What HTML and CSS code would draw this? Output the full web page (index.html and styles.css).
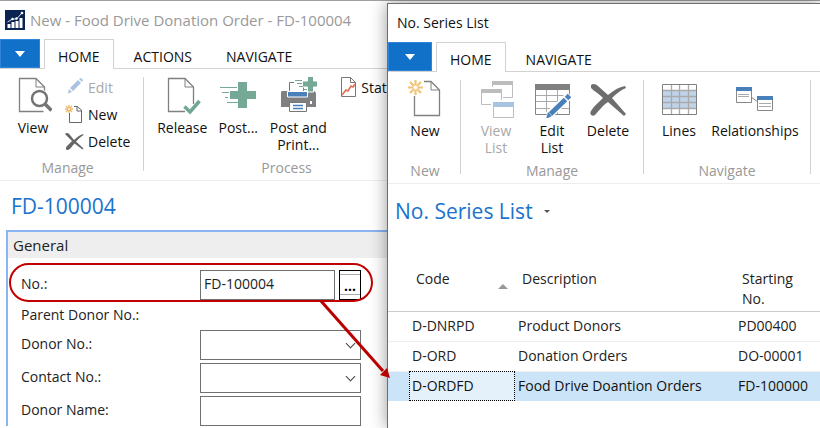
FILE: index.html
```
<!DOCTYPE html>
<html lang="en">
<head>
<meta charset="utf-8">
<title>New - Food Drive Donation Order - FD-100004</title>
<link rel="stylesheet" href="styles.css">
</head>
<body>
<div class="desktop">

<!-- donation order -->
<div class="window order">
  <div class="titlebar">
    <svg class="logo" width="20" height="20" viewBox="0 0 20 20"><path fill="#0b2350" d="M0 0h20v20H0z"/><path fill="#fff" d="M2.500 14h3v4h-3zM6.500 12h3v6h-3zM10.500 11h3v7h-3zM14.500 8h3v10h-3z"/><path fill="none" stroke="#dfe5ee" d="M2.500 12l5-3 4 0 5.500-6"/><circle cx="7.500" cy="9" r="1.200" fill="#fff"/><circle cx="11.500" cy="8.500" r="1.200" fill="#fff"/><circle cx="17" cy="3" r="1.300" fill="#fff"/></svg>
    <span>New - Food Drive Donation Order - FD-100004</span>
  </div>
  <div class="tabs">
    <button class="file" aria-label="Menu"></button>
    <button class="tab active">HOME</button>
    <button class="tab">ACTIONS</button>
    <button class="tab">NAVIGATE</button>
  </div>
  <div class="ribbon">
    <div class="group">
      <div class="tools">
        <button class="big">
          <svg width="38" height="38" viewBox="0 0 38 38"><path fill="#fff" stroke="#808080" stroke-width="1.300" d="M29.500 34.500H5.500V1.500H22l8.500 8.500v5"/><path fill="none" stroke="#808080" d="M22 1.500v8.500h8.500"/><circle cx="25.500" cy="21.500" r="9.500" fill="#fff"/><circle cx="25.500" cy="21.500" r="7.500" fill="#fff" stroke="#747474" stroke-width="2.500"/><path stroke="#747474" stroke-width="3.500" d="M31 27l6.500 6.500"/></svg>
          View
        </button>
        <div class="stack">
          <button class="small off">
            <svg width="20" height="20" viewBox="0 0 20 20"><path fill="#a9c3df" d="M13 3l3 3-8 8-3-3zM4 12l3 3-4 1.500zM14 2l2-1 2 2-1 2z"/></svg>
            Edit
          </button>
          <button class="small">
            <svg width="20" height="20" viewBox="0 0 20 20"><path fill="none" stroke="#666" d="M4.500 9v9.500h12V6L12 2.500H9M12 2.500V7h4.500"/><path stroke="#edb765" stroke-width="1.300" d="M4 1v8M0 5h8M1 2l6 6M7 2L1 8"/><circle cx="4" cy="5" r="1" fill="#fff"/></svg>
            New
          </button>
          <button class="small">
            <svg width="20" height="20" viewBox="0 0 20 20"><path fill="#666" d="M0 3c1-2 4-1 5 1l4 5c3-3 6-5 9-6l.5 1c-3 2-5 4-7.500 6.500l7.500 7-1 1L9.500 12.500C6.500 15.500 5 19 2.500 19S1 16 2 15l5-5z"/></svg>
            Delete
          </button>
        </div>
      </div>
      <div class="caption">Manage</div>
    </div>
    <div class="group process">
      <div class="tools">
        <button class="big">
          <svg width="38" height="38" viewBox="0 0 38 38"><path fill="#fff" stroke="#808080" stroke-width="1.300" d="M22 34.500H5.500V1.500H22l8.500 8.500v17"/><path fill="none" stroke="#808080" d="M22 1.500v8.500h8.500"/><path fill="none" stroke="#72a594" stroke-width="3.500" d="M21.500 29.500l5.500 5.500 9.500-11"/></svg>
          Release
        </button>
        <button class="big">
          <svg width="38" height="38" viewBox="0 0 38 38"><path fill="#76a896" d="M19 5h9v9h9v8h-9v9h-9v-9h-8v-8h8z"/><path stroke="#76a896" d="M1 10.500h17M3 15.500h7M6 20.500h3M8 25.500h11"/></svg>
          Post...
        </button>
        <button class="big wide">
          <svg width="38" height="38" viewBox="0 0 38 38"><path fill="#fff" stroke="#777" d="M10.500 16V5.500h14V16"/><path fill="#808080" d="M3 14h31q3 0 3 3v13H2V16q0-2 1-2z"/><path fill="#4a80ba" stroke="#fff" d="M8.500 14.500h20v5.500h-20z"/><path fill="#fff" stroke="#777" d="M10.500 25.500h17v9h-17z"/><path fill="#fff" d="M31 24h2v3h-2z"/><path stroke="#4a80ba" stroke-width="1.500" d="M14 28.500h10M14 31.500h10"/><path fill="#fff" d="M14 0h14v10H16z"/><path fill="#76a896" stroke="#fff" d="M28.500-1h6v5h4v6h-4v5h-6v-5h-5V4h5z"/><path stroke="#76a896" d="M16 3.500h7M18 6.500h5M20 9.500h4M24 12.500h4"/></svg>
          Post and<br>Print...
        </button>
        <button class="small stats">
          <svg width="20" height="20" viewBox="0 0 20 20"><path fill="#fff" stroke="#777" d="M3.500.5h9l5 5v14h-14z"/><path fill="none" stroke="#777" d="M12.500.5v5h5"/><path fill="none" stroke="#df6f55" stroke-width="1.600" d="M4 18l4-5 2 1 3-5 2 1 2-3"/></svg>
          Statistics
        </button>
      </div>
      <div class="caption">Process</div>
    </div>
  </div>

  <h1 class="heading">FD-100004</h1>

  <div class="fasttab">
    <h2>General</h2>
    <form class="fields">
      <label for="no">No.:</label>
      <div class="lookup"><input type="text" id="no" value="FD-100004"><button type="button" class="dots" aria-label="Lookup">...</button></div>
      <div class="plain">Parent Donor No.:</div>
      <label for="donor">Donor No.:</label>
      <div class="drop"><select id="donor"><option></option></select></div>
      <label for="contact">Contact No.:</label>
      <div class="drop"><select id="contact"><option></option></select></div>
      <label for="name">Donor Name:</label>
      <input type="text" id="name">
    </form>
  </div>
</div>

<!-- number series list -->
<div class="window series">
  <div class="titlebar">No. Series List</div>
  <div class="tabs">
    <button class="file" aria-label="Menu"></button>
    <button class="tab active">HOME</button>
    <button class="tab">NAVIGATE</button>
  </div>
  <div class="ribbon">
    <div class="group first">
      <div class="tools">
        <button class="big">
          <svg width="38" height="38" viewBox="0 0 38 38"><path fill="#fff" stroke="#808080" stroke-width="1.300" d="M8.500 16v19.500h25V10L25 1.500H18"/><path fill="none" stroke="#808080" d="M25 1.500V10h8.500"/><path stroke="#f0c476" stroke-width="2.200" d="M9.500 0v5M9.500 10v5M2 7.500h5M12 7.500h5M4 2l3.500 3.500M11.500 9.500L15 13M15 2l-3.500 3.500M7.500 9.500L4 13"/><circle cx="9.500" cy="7.500" r="2.500" fill="#fff" stroke="#f0c476"/></svg>
          New
        </button>
      </div>
      <div class="caption">New</div>
    </div>
    <div class="group">
      <div class="tools">
        <button class="big off">
          <svg width="38" height="38" viewBox="0 0 38 38"><path fill="#fff" stroke="#bdbdbd" d="M15.500 3.500h20v14h-20z"/><path fill="#bdbdbd" d="M15 1h21v4H15z"/><path fill="#fff" d="M2 7h24v19H2z"/><path fill="#fff" stroke="#bdbdbd" d="M4.500 10.500h20v14h-20z"/><path fill="#bdbdbd" d="M4 9h21v4H4z"/><path fill="#fff" d="M14 20h24v18H14z"/><path fill="#fff" stroke="#bdbdbd" d="M16.500 24.500h20v13h-20z"/><path fill="#a7c3df" d="M16 22h21v5H16z"/></svg>
          View<br>List
        </button>
        <button class="big">
          <svg width="38" height="38" viewBox="0 0 38 38"><path fill="#fff" stroke="#858585" d="M2.500 5.500h34v29h-34z"/><path stroke="#aaa" d="M3 15.500h33M3 21.500h33M3 28.500h33M13.500 9v25M24.500 9v25"/><path fill="#808080" d="M2 4h35v6H2z"/><path stroke="#fff" stroke-width="8" d="M15 36l22-21"/><path stroke="#4a80ba" stroke-width="5" d="M17.500 34l15-14.500M33.500 18.500l3-3"/><path fill="#4a80ba" d="M15 32l4 4-6 3z"/></svg>
          Edit<br>List
        </button>
        <button class="big">
          <svg width="38" height="38" viewBox="0 0 38 38"><path fill="#6e6e6e" d="M2 5c2-2 5-1 7 1l10 9c6-5 11-8 17-9l1 2c-5 2-10 6-14 10l14 16-2 2-16-14C13 26 9 32 6 35c-3 2-6-1-4-4 3-5 7-8 12-13C9 13 5 11 2 8z"/></svg>
          Delete
        </button>
      </div>
      <div class="caption">Manage</div>
    </div>
    <div class="group">
      <div class="tools">
        <button class="big">
          <svg width="38" height="38" viewBox="0 0 38 38"><path fill="#fff" d="M2 4h35v31H2z"/><path fill="#bfd3e9" d="M2 10h35v19H2z"/><path fill="none" stroke="#aaa" stroke-width="1.300" d="M2 10.500h35M2 16.500h35M2 22.500h35M2 28.500h35M11.500 4v31M19.500 4v31M28.500 4v31"/><path fill="none" stroke="#808080" d="M2.500 4.500h34v30h-34z"/></svg>
          Lines
        </button>
        <button class="big xwide">
          <svg width="38" height="38" viewBox="0 0 38 38"><path fill="none" stroke="#888" d="M15 17l7 5"/><path fill="#fff" stroke="#888" d="M.5 7.500h15v15H.5zM21.500 16.500h15v14h-15z"/><path fill="#4a80ba" d="M0 7h16v4H0zM21 16h16v4H21z"/><path stroke="#aaa" d="M2 14.500h11M2 16.500h11M23 23.500h12M23 26.500h12"/></svg>
          Relationships
        </button>
      </div>
      <div class="caption">Navigate</div>
    </div>
  </div>

  <h1 class="heading">No. Series List <span class="caret"></span></h1>

  <table class="list">
    <thead>
      <tr><th class="gutter"></th><th class="code">Code<span class="sort"></span></th><th class="desc">Description</th><th>Starting<br>No.</th></tr>
    </thead>
    <tbody>
      <tr><td></td><td>D-DNRPD</td><td>Product Donors</td><td>PD00400</td></tr>
      <tr><td></td><td>D-ORD</td><td>Donation Orders</td><td>DO-00001</td></tr>
      <tr class="selected"><td></td><td class="focus">D-ORDFD</td><td>Food Drive Doantion Orders</td><td>FD-100000</td></tr>
    </tbody>
  </table>
</div>

<!-- callout from the No. field to the selected series -->
<svg class="callout" width="384" height="120" viewBox="0 0 384 120">
  <rect x="2" y="2" width="362" height="37" rx="18.500" fill="none" stroke="#c00000" stroke-width="2"/>
  <path stroke="#b80000" stroke-width="3" d="M313 39l62 70"/>
  <path fill="#b80000" d="M382 116l-10-3 7-7z"/>
</svg>

</div>
</body>
</html>
```
FILE: styles.css
```
* {
    box-sizing: border-box;
}

body {
    margin: 0;
    font-family: "Open Sans", "Noto Sans", sans-serif;
    font-size: 14px;
    color: #222;
    background: #fff;
}

button, input, select {
    font: inherit;
    color: inherit;
    margin: 0;
    border-radius: 0;
}

button {
    padding: 0;
    border: none;
    background: none;
}

h1, h2 {
    margin: 0;
    font-weight: normal;
}

.desktop {
    position: relative;
    min-height: 100vh;
    overflow: hidden;
}

.window {
    background: #fff;
}

.order {
    border-top: 1px solid #a0a0a0;
}

.series {
    position: absolute;
    top: 3px;
    right: 0;
    bottom: 0;
    left: 387px;
    border-top: 1px solid #6e6e6e;
    border-left: 1px solid #6e6e6e;
    box-shadow: 0 0 16px rgba(0, 0, 0, 0.4);
}

.titlebar {
    display: flex;
    align-items: center;
    gap: 5px;
    height: 38px;
    padding: 0 5px;
    color: #999;
    font-size: 15px;
}

.series .titlebar {
    padding: 0 9px 2px;
    color: #111;
    font-size: 14px;
}

/* ribbon */
.tabs {
    display: flex;
    height: 30px;
    border-bottom: 1px solid #d2d2d2;
}

.file {
    width: 40px;
    height: 29px;
    margin-right: 4px;
    background: #1170c8;
    border: 1px solid #2f86d8;
}

.series .file {
    width: 44px;
}

.file::before {
    content: "";
    display: block;
    width: 0;
    margin: 0 auto;
    border: 5px solid transparent;
    border-top: 6px solid #fff;
    border-bottom: none;
}

.tab {
    height: 30px;
    padding: 4px 17px 0;
    color: #111;
}

.tab.active {
    padding: 3px 13px 0;
    margin-right: 3px;
    background: #fff;
    border: 1px solid #d2d2d2;
    border-bottom: none;
}

.ribbon {
    display: flex;
    height: 112px;
    padding: 8px 0 9px;
    border-bottom: 1px solid #eee;
}

.group {
    flex: none;
    display: flex;
    flex-direction: column;
    justify-content: space-between;
    padding: 0 7px;
    border-right: 1px solid #d2d2d2;
}

.group.first {
    padding: 0 7px 0 9px;
}

.order .group {
    padding: 0 13px 0 5px;
}

.order .process {
    padding: 0 10px;
}

.tools {
    display: flex;
    align-items: flex-start;
}

.big {
    display: flex;
    flex-direction: column;
    align-items: center;
    width: 56px;
    line-height: 17px;
    color: #111;
    white-space: nowrap;
}

.big svg {
    margin-bottom: 4px;
}

.wide {
    width: 64px;
}

.xwide {
    width: 96px;
}

.stack {
    display: flex;
    flex-direction: column;
    gap: 7px;
    margin-left: 4px;
}

.small {
    display: flex;
    align-items: center;
    gap: 3px;
    height: 20px;
    color: #111;
}

.stats {
    margin-left: 8px;
}

.off {
    color: #a8a8a8;
}

.caption {
    margin-bottom: -4px;
    line-height: 14px;
    color: #999;
    text-align: center;
}

.heading {
    display: flex;
    align-items: center;
    height: 49px;
    padding: 0 11px;
    font-size: 21px;
    color: #1a73cc;
}

.series .heading {
    height: 54px;
    padding: 0 7px;
}

.caret {
    margin-left: 11px;
    border: 3px solid transparent;
    border-top-color: #555;
    border-bottom: none;
}

/* general fasttab */
.fasttab {
    margin-left: 6px;
    border-top: 2px solid #8ab4f2;
    border-left: 2px solid #8ab4f2;
}

.fasttab h2 {
    padding-left: 5px;
    font-size: 15px;
    line-height: 26px;
    background: #eee;
}

.fields {
    display: grid;
    grid-template-columns: 179px 161px;
    row-gap: 3px;
    align-items: center;
    padding: 12px 0 0 13px;
}

.fields label {
    padding-bottom: 3px;
}

.plain {
    grid-column: 1 / 3;
    line-height: 24px;
}

.fields input, .fields select {
    display: block;
    width: 100%;
    height: 30px;
    padding: 0 3px 3px;
    background: #fff;
    border: 1px solid #707070;
}

.lookup {
    display: flex;
    gap: 4px;
}

.dots {
    flex: none;
    width: 22px;
    height: 30px;
    font-weight: bold;
    color: #000;
    background: linear-gradient(#aaa, #aaa) 0 3px / 100% 1px no-repeat,
                linear-gradient(#aaa, #aaa) 0 23px / 100% 1px no-repeat #fff;
    border: 1px solid #000;
}

.drop {
    position: relative;
}

.fields select {
    appearance: none;
}

.drop::after {
    content: "";
    position: absolute;
    top: 10px;
    right: 7px;
    width: 6px;
    height: 6px;
    border-right: 1px solid #444;
    border-bottom: 1px solid #444;
    transform: rotate(45deg);
    pointer-events: none;
}

/* series list */
.list {
    width: 100%;
    table-layout: fixed;
    border-collapse: collapse;
    margin-top: 31px;
}

.list th {
    height: 42px;
    padding: 0 7px;
    font-weight: normal;
    line-height: 20px;
    text-align: left;
    vertical-align: top;
    border-bottom: 1px solid #ccc;
}

.list td {
    height: 30px;
    padding: 0 3px 2px;
    border-bottom: 1px solid #eee;
    white-space: nowrap;
}

.gutter {
    width: 21px;
}

.code {
    position: relative;
    width: 106px;
}

.desc {
    width: 220px;
}

.sort {
    position: absolute;
    right: 7px;
    top: 15px;
    border: 5px solid transparent;
    border-bottom-color: #999;
    border-top: none;
}

.list .selected td {
    color: #111;
    background: #cce4f7;
    border-bottom: none;
}

.list .selected .focus {
    background: #e5f1fa;
    outline: 1px dotted #000;
    outline-offset: -1px;
}

.callout {
    position: absolute;
    top: 262px;
    left: 8px;
    pointer-events: none;
}
```
